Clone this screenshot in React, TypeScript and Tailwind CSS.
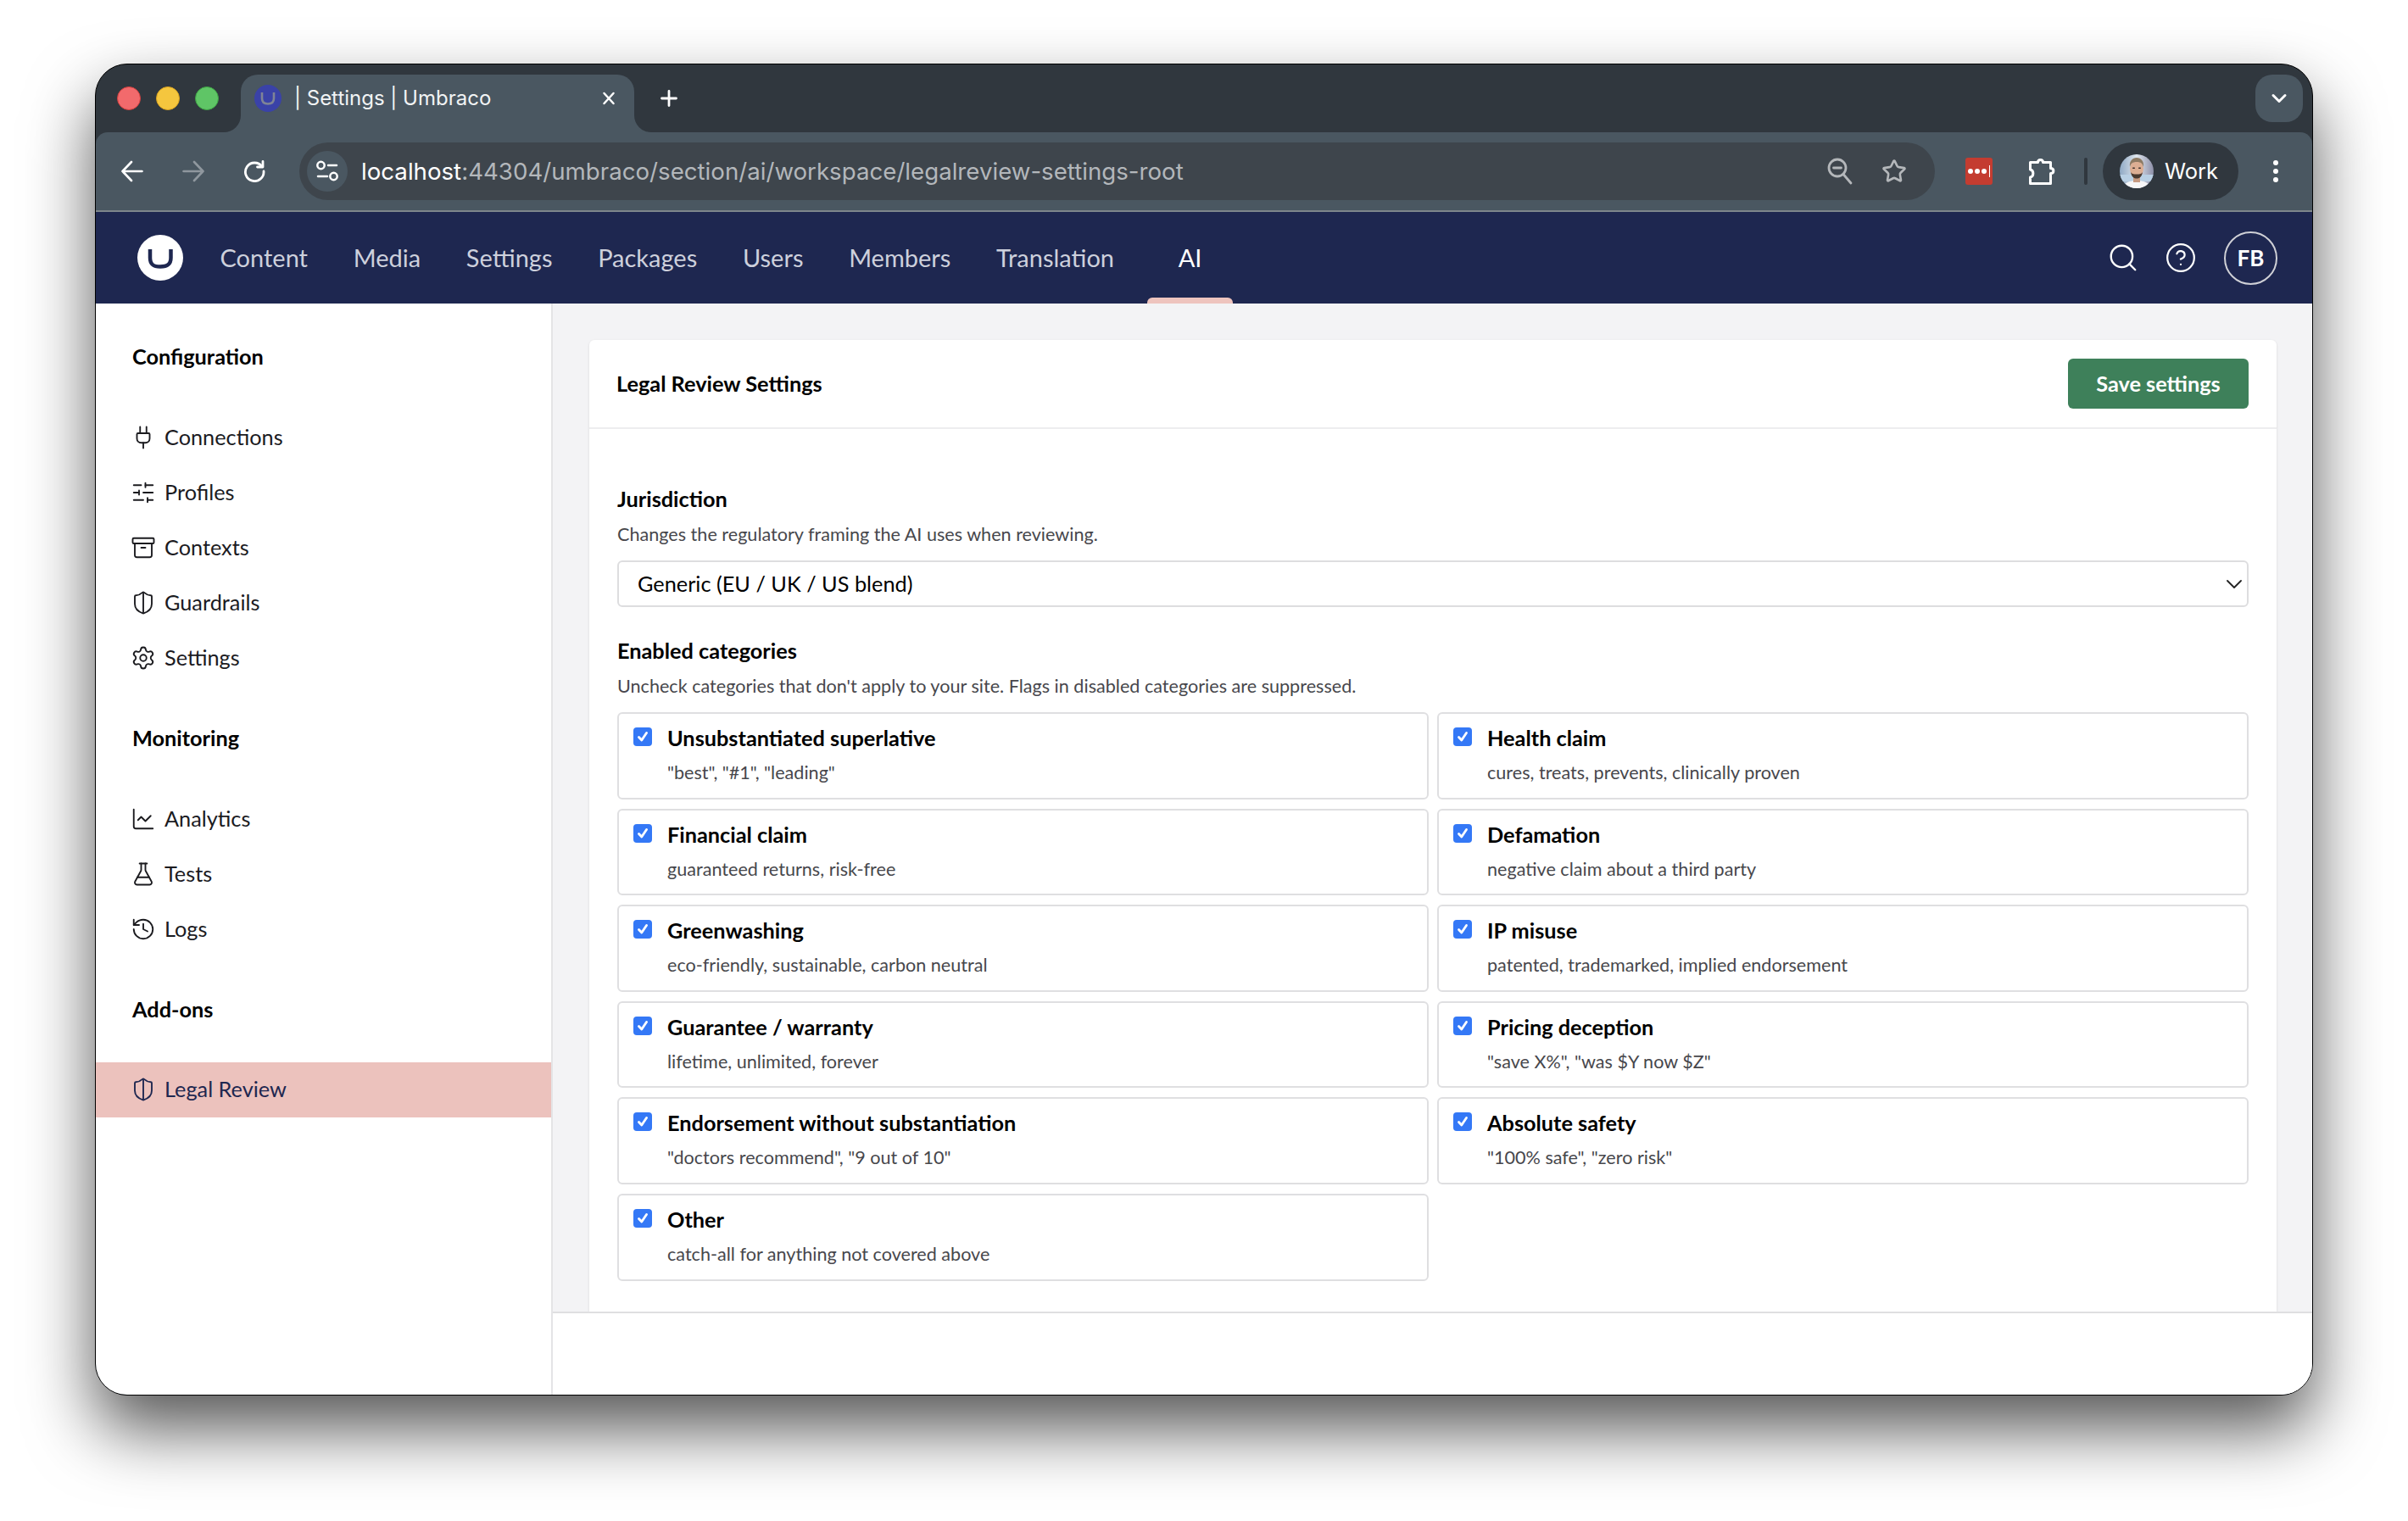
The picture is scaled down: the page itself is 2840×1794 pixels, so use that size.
import React from "react";
import { Plug, SlidersHorizontal, Archive, Settings, ChartLine, FlaskConical, History, Search, CircleHelp, Star } from "lucide-react";

const ShieldIcon = ({ color = "currentColor" }: { color?: string }) => (
  <svg width="30" height="30" viewBox="0 0 24 24" fill="none" stroke={color} strokeWidth="1.5" strokeLinecap="round" strokeLinejoin="round">
    <path d="M20 13c0 5-3.500 7.500-7.660 8.950a1 1 0 0 1-.67-.01C7.500 20.500 4 18 4 13V6a1 1 0 0 1 1-1c2 0 4.500-1.200 6.240-2.720a1.170 1.170 0 0 1 1.520 0C14.510 3.810 17 5 19 5a1 1 0 0 1 1 1z" />
    <path d="M12 3v18" />
  </svg>
);

const groups = [
  {
    title: "Configuration",
    items: [
      { label: "Connections", icon: <Plug size={30} strokeWidth={1.5} /> },
      { label: "Profiles", icon: <SlidersHorizontal size={30} strokeWidth={1.5} /> },
      { label: "Contexts", icon: <Archive size={30} strokeWidth={1.5} /> },
      { label: "Guardrails", icon: <ShieldIcon /> },
      { label: "Settings", icon: <Settings size={30} strokeWidth={1.5} /> },
    ],
  },
  {
    title: "Monitoring",
    items: [
      { label: "Analytics", icon: <ChartLine size={30} strokeWidth={1.5} /> },
      { label: "Tests", icon: <FlaskConical size={30} strokeWidth={1.5} /> },
      { label: "Logs", icon: <History size={30} strokeWidth={1.5} /> },
    ],
  },
];

const categories = [
  ["Unsubstantiated superlative", '"best", "#1", "leading"'],
  ["Health claim", "cures, treats, prevents, clinically proven"],
  ["Financial claim", "guaranteed returns, risk-free"],
  ["Defamation", "negative claim about a third party"],
  ["Greenwashing", "eco-friendly, sustainable, carbon neutral"],
  ["IP misuse", "patented, trademarked, implied endorsement"],
  ["Guarantee / warranty", "lifetime, unlimited, forever"],
  ["Pricing deception", '"save X%", "was $Y now $Z"'],
  ["Endorsement without substantiation", '"doctors recommend", "9 out of 10"'],
  ["Absolute safety", '"100% safe", "zero risk"'],
  ["Other", "catch-all for anything not covered above"],
];

const nav = ["Content", "Media", "Settings", "Packages", "Users", "Members", "Translation"];

const Avatar = () => (
  <svg width="40" height="40" viewBox="0 0 40 40" className="rounded-full shrink-0">
    <defs>
      <linearGradient id="avbg" x1="0" y1="0" x2="1" y2="0">
        <stop offset="0" stopColor="#8fa9c4" />
        <stop offset="0.5" stopColor="#dfe6ee" />
        <stop offset="1" stopColor="#8d8fa8" />
      </linearGradient>
    </defs>
    <rect width="40" height="40" fill="url(#avbg)" />
    <rect y="24" width="40" height="8" fill="#b9d0e4" />
    <path d="M4 40c1-7 8-9 16-9s15 2 16 9z" fill="#f7f7f8" />
    <rect x="16" y="24" width="8" height="9" fill="#c89b82" />
    <ellipse cx="20" cy="17" rx="8" ry="10" fill="#dcae93" />
    <path d="M12 15c-1-7 3-11 8-11s9 4 8 11c-1-4-3-6-8-6s-7 2-8 6z" fill="#8d7a63" />
    <path d="M13 21c1 6 4 7.500 7 7.500s6-1.500 7-7.500c-1 2-3 2.500-7 2.500s-6-.5-7-2.500z" fill="#4a3a30" />
    <rect x="15" y="15.500" width="3" height="1.500" rx=".7" fill="#3b2f2a" />
    <rect x="22" y="15.500" width="3" height="1.500" rx=".7" fill="#3b2f2a" />
  </svg>
);

const Checkbox = () => (
  <span className="w-[22px] h-[22px] mt-[5px] shrink-0 rounded-[4px] bg-[#3478f6] flex items-center justify-center">
    <svg width="16" height="16" viewBox="0 0 16 16" fill="none" stroke="#fff" strokeWidth="2.800" strokeLinecap="round" strokeLinejoin="round">
      <path d="M3.500 8.500 6.800 12 12.500 3.500" />
    </svg>
  </span>
);

export default function App() {
  return (
    <div className="w-[2840px] h-[1794px] bg-white pt-[75px] pl-[112px] overflow-hidden font-['Lato',sans-serif]">
      <div className="w-[2616px] h-[1571px] flex flex-col rounded-[38px] overflow-hidden border border-black bg-[#30373e] shadow-[0_40px_80px_rgba(0,0,0,0.66)]">
        {/* Tab strip */}
        <div className="h-[80px] shrink-0 flex items-end font-['Inter',sans-serif]">
          <div className="h-[80px] flex items-center gap-[18px] pl-[25px]">
            <span className="w-[28px] h-[28px] rounded-full bg-[#f26a6c] border border-[#d4403f]" />
            <span className="w-[28px] h-[28px] rounded-full bg-[#f5c63e] border border-[#d9a320]" />
            <span className="w-[28px] h-[28px] rounded-full bg-[#5fc566] border border-[#3ea345]" />
          </div>
          <div className="relative ml-[26px] w-[464px] h-[68px] rounded-t-[20px] bg-[#4a5761] flex items-center pl-[16px] pr-[22px] pb-[12px]">
            <svg className="absolute bottom-0 left-[-20px]" width="20" height="20" viewBox="0 0 20 20"><path d="M20 0V20H0A20 20 0 0 0 20 0Z" fill="#4a5761" /></svg>
            <svg className="absolute bottom-0 right-[-20px]" width="20" height="20" viewBox="0 0 20 20"><path d="M0 0V20H20A20 20 0 0 1 0 0Z" fill="#4a5761" /></svg>
            <span className="w-[32px] h-[32px] rounded-full bg-[#3a42a8] flex items-center justify-center shrink-0">
              <svg width="32" height="32" viewBox="0 0 32 32" fill="none"><path d="M9 9v7c0 5 2.500 6.500 7 6.500s7-1.500 7-6.500V9" stroke="#7f8496" strokeWidth="2.600" /></svg>
            </span>
            <span className="ml-[15px] text-[24px] leading-[32px] text-[#f1f3f4] whitespace-nowrap">| Settings | Umbraco</span>
            <svg className="ml-auto" width="16" height="18" viewBox="0 0 16 18" fill="none" stroke="#fff" strokeWidth="2.500" strokeLinecap="round"><path d="M2.500 3 13.500 15M13.500 3 2.500 15" /></svg>
          </div>
          <div className="h-[68px] flex items-center ml-[31px] pb-[12px]">
            <svg width="20" height="20" viewBox="0 0 20 20" fill="none" stroke="#fff" strokeWidth="2.800" strokeLinecap="round"><path d="M10 1.500v17M1.500 10h17" /></svg>
          </div>
          <div className="ml-auto mr-[11px] h-[56px] mb-[12px] w-[56px] rounded-[20px] bg-[#4a5761] flex items-center justify-center">
            <svg width="20" height="14" viewBox="0 0 20 14" fill="none" stroke="#fff" strokeWidth="3" strokeLinecap="round" strokeLinejoin="round"><path d="M3 3.500 10 10.500 17 3.500" /></svg>
          </div>
        </div>

        {/* Toolbar */}
        <div className="h-[92px] shrink-0 rounded-t-[14px] bg-[#4a5761] flex items-center pl-[19px] font-['Inter',sans-serif]">
          <span className="w-[48px] h-[48px] flex items-center justify-center">
            <svg width="26" height="26" viewBox="0 0 26 26" fill="none" stroke="#fff" strokeWidth="2.600" strokeLinecap="round" strokeLinejoin="round"><path d="M1.500 13H24.500M12 2 1.500 13 12 24" /></svg>
          </span>
          <span className="w-[48px] h-[48px] ml-[24px] flex items-center justify-center">
            <svg width="26" height="26" viewBox="0 0 26 26" fill="none" stroke="#8f979e" strokeWidth="2.600" strokeLinecap="round" strokeLinejoin="round"><path d="M24.500 13H1.500M14 2 24.500 13 14 24" /></svg>
          </span>
          <span className="w-[48px] h-[48px] ml-[24px] flex items-center justify-center">
            <svg width="26" height="26" viewBox="0 0 26 26" fill="none" stroke="#fff" strokeWidth="2.800" strokeLinecap="round" strokeLinejoin="round"><path d="M22 7.500A10.800 10.800 0 1 0 24 13" /><path d="M23 1.500V8H16.500" /></svg>
          </span>
          <div className="ml-[29px] w-[1929px] h-[68px] rounded-[34px] bg-[#3e454c] flex items-center pl-[9px] pr-[33px]">
            <span className="w-[48px] h-[48px] rounded-full bg-[#4a5761] flex items-center justify-center shrink-0">
              <svg width="48" height="48" viewBox="0 0 48 48" fill="none" stroke="#fff" strokeWidth="2.500" strokeLinecap="round"><circle cx="16.500" cy="17" r="4.200" /><path d="M25 17H35" /><path d="M13 30H24" /><circle cx="31.500" cy="30" r="4.200" /></svg>
            </span>
            <span className="ml-[16px] text-[27.660px] leading-[40px] whitespace-nowrap text-[#b3b7bb]"><span className="text-white">localhost</span>:44304/umbraco/section/ai/workspace/legalreview-settings-root</span>
            <svg className="ml-auto" width="30" height="32" viewBox="0 0 30 32" fill="none" stroke="#b4b7ba" strokeWidth="2.800" strokeLinecap="round"><circle cx="12" cy="12" r="10" /><path d="M7.500 12H16.500" /><path d="M19 19.500 28 30" /></svg>
            <span className="ml-[34px] text-[#b4b7ba]"><Star size={30} strokeWidth={2.100} /></span>
          </div>
          <span className="ml-[36px] w-[32px] h-[32px] rounded-[3px] bg-[#c43c30] flex items-center justify-center gap-[2px]">
            <span className="w-[6px] h-[6px] rounded-full bg-white" />
            <span className="w-[6px] h-[6px] rounded-full bg-white" />
            <span className="w-[6px] h-[6px] rounded-full bg-white" />
            <span className="w-[1.500px] h-[14px] ml-[1px] bg-white" />
          </span>
          <svg className="ml-[42px]" width="32" height="32" viewBox="0 0 32 32" fill="none" stroke="#fff" strokeWidth="3" strokeLinejoin="round"><path d="M2.500 5.500H11.500C11.500 1.500 17.500 1.500 17.500 5.500H26.500V12.500C31 12.500 31 18.500 26.500 18.500V30.500H2.500V23C7 22 7 15 2.500 14Z" /></svg>
          <span className="ml-[34px] w-[4px] h-[32px] rounded-full bg-[#30373e]" />
          <div className="ml-[18px] w-[160px] h-[68px] rounded-[34px] bg-[#30373e] flex items-center pl-[20px]">
            <Avatar />
            <span className="ml-[13px] text-[25.500px] text-white">Work</span>
          </div>
          <div className="ml-[28px] w-[32px] flex flex-col items-center gap-[4px]">
            <span className="w-[6px] h-[6px] rounded-full bg-white" />
            <span className="w-[6px] h-[6px] rounded-full bg-white" />
            <span className="w-[6px] h-[6px] rounded-full bg-white" />
          </div>
        </div>
        <div className="h-[2px] shrink-0 bg-[#7d868c]" />

        {/* Header */}
        <header className="h-[108px] shrink-0 bg-[#1e2750] flex items-center pl-[49px] pr-[41px]">
          <span className="w-[54px] h-[54px] rounded-full bg-white flex items-center justify-center shrink-0">
            <svg width="54" height="54" viewBox="0 0 54 54" fill="none"><path d="M15 17V27C15 35.500 19.500 37.500 27 37.500S39.500 35.500 39.500 27V17" stroke="#1e2750" strokeWidth="4.500" /></svg>
          </span>
          <nav className="ml-[43.500px] flex items-center gap-[53.700px] text-[29px] text-[#cdd0dc]">
            {nav.map((n) => <span key={n}>{n}</span>)}
          </nav>
          <div className="relative ml-[39px] w-[101px] h-[108px] flex items-center justify-center text-[29px] text-white">
            AI
            <span className="absolute bottom-0 left-0 right-0 h-[7px] rounded-t-[6px] bg-[#eec4be]" />
          </div>
          <span className="ml-auto text-white"><Search size={38} strokeWidth={1.500} /></span>
          <span className="ml-[30px] text-white"><CircleHelp size={38} strokeWidth={1.400} /></span>
          <span className="ml-[32px] w-[63px] h-[63px] rounded-full border-2 border-[#cfd0d6] flex items-center justify-center text-[26px] font-bold text-white">FB</span>
        </header>

        {/* Body */}
        <div className="flex-1 min-h-0 flex bg-white">
          <aside className="w-[539px] shrink-0 border-r-2 border-[#e4e4e6] pt-[38.500px] text-[#1b1b1f]">
            {groups.map((g, i) => (
              <div key={g.title} className={i ? "mt-[38px]" : ""}>
                <h3 className="h-[48px] pl-[43px] flex items-center text-[25.300px] font-bold text-black">{g.title}</h3>
                <div className="mt-[39px]">
                  {g.items.map((it) => (
                    <div key={it.label} className="h-[65px] pl-[41px] flex items-center gap-[10px] text-[25.300px]">
                      {it.icon}
                      <span>{it.label}</span>
                    </div>
                  ))}
                </div>
              </div>
            ))}
            <div className="mt-[38px]">
              <h3 className="h-[48px] pl-[43px] flex items-center text-[25.300px] font-bold text-black">Add-ons</h3>
              <div className="mt-[38px] h-[65px] pl-[41px] flex items-center gap-[10px] text-[25.300px] bg-[#ecc2bd] text-[#1e2750]">
                <ShieldIcon />
                <span>Legal Review</span>
              </div>
            </div>
          </aside>

          <div className="flex-1 min-w-0 flex flex-col">
            <main className="h-[1191px] shrink-0 overflow-hidden bg-[#f3f3f5] pl-[43px] pr-[42px] pt-[43px] border-b-2 border-[#dfdfe1]">
              <section className="h-full rounded-t-[6px] bg-white shadow-[0_1px_3px_rgba(0,0,0,0.12)]">
                <div className="h-[105px] border-b-2 border-[#ededef] flex items-center justify-between pl-[32px] pr-[33px]">
                  <h2 className="text-[25.300px] font-bold text-black">Legal Review Settings</h2>
                  <button className="w-[213px] h-[59px] rounded-[6px] bg-[#3e805a] text-white text-[25.300px] font-bold">Save settings</button>
                </div>
                <div className="px-[33px] pt-[65px]">
                  <div className="h-[34px] leading-[34px] text-[25.300px] font-bold text-black">Jurisdiction</div>
                  <div className="mt-[9px] h-[32px] leading-[32px] text-[21.600px] text-[#47474c]">Changes the regulatory framing the AI uses when reviewing.</div>
                  <div className="mt-[15px] h-[55px] rounded-[6px] border-2 border-[#dddddf] flex items-center justify-between pl-[22px] pr-[6px] text-[25.300px] text-black">
                    <span>Generic (EU / UK / US blend)</span>
                    <svg width="18" height="10" viewBox="0 0 18 10" fill="none" stroke="#222" strokeWidth="1.800" strokeLinecap="round" strokeLinejoin="round"><path d="M1 1 9 9 17 1" /></svg>
                  </div>
                  <div className="mt-[34px] h-[34px] leading-[34px] text-[25.300px] font-bold text-black">Enabled categories</div>
                  <div className="mt-[9px] h-[32px] leading-[32px] text-[21.600px] text-[#47474c]">Uncheck categories that don't apply to your site. Flags in disabled categories are suppressed.</div>
                  <div className="mt-[15px] grid grid-cols-2 gap-x-[10px] gap-y-[11px]">
                    {categories.map(([t, s]) => (
                      <div key={t} className="h-[102.600px] rounded-[6px] border-2 border-[#dfdfe1] flex gap-[18px] pl-[17px] pt-[11px]">
                        <Checkbox />
                        <div>
                          <div className="h-[34px] leading-[34px] text-[25.300px] font-bold text-black">{t}</div>
                          <div className="mt-[8px] h-[32px] leading-[32px] text-[21.600px] text-[#47474c]">{s}</div>
                        </div>
                      </div>
                    ))}
                  </div>
                </div>
              </section>
            </main>
            <div className="flex-1 bg-white" />
          </div>
        </div>
      </div>
    </div>
  );
}
